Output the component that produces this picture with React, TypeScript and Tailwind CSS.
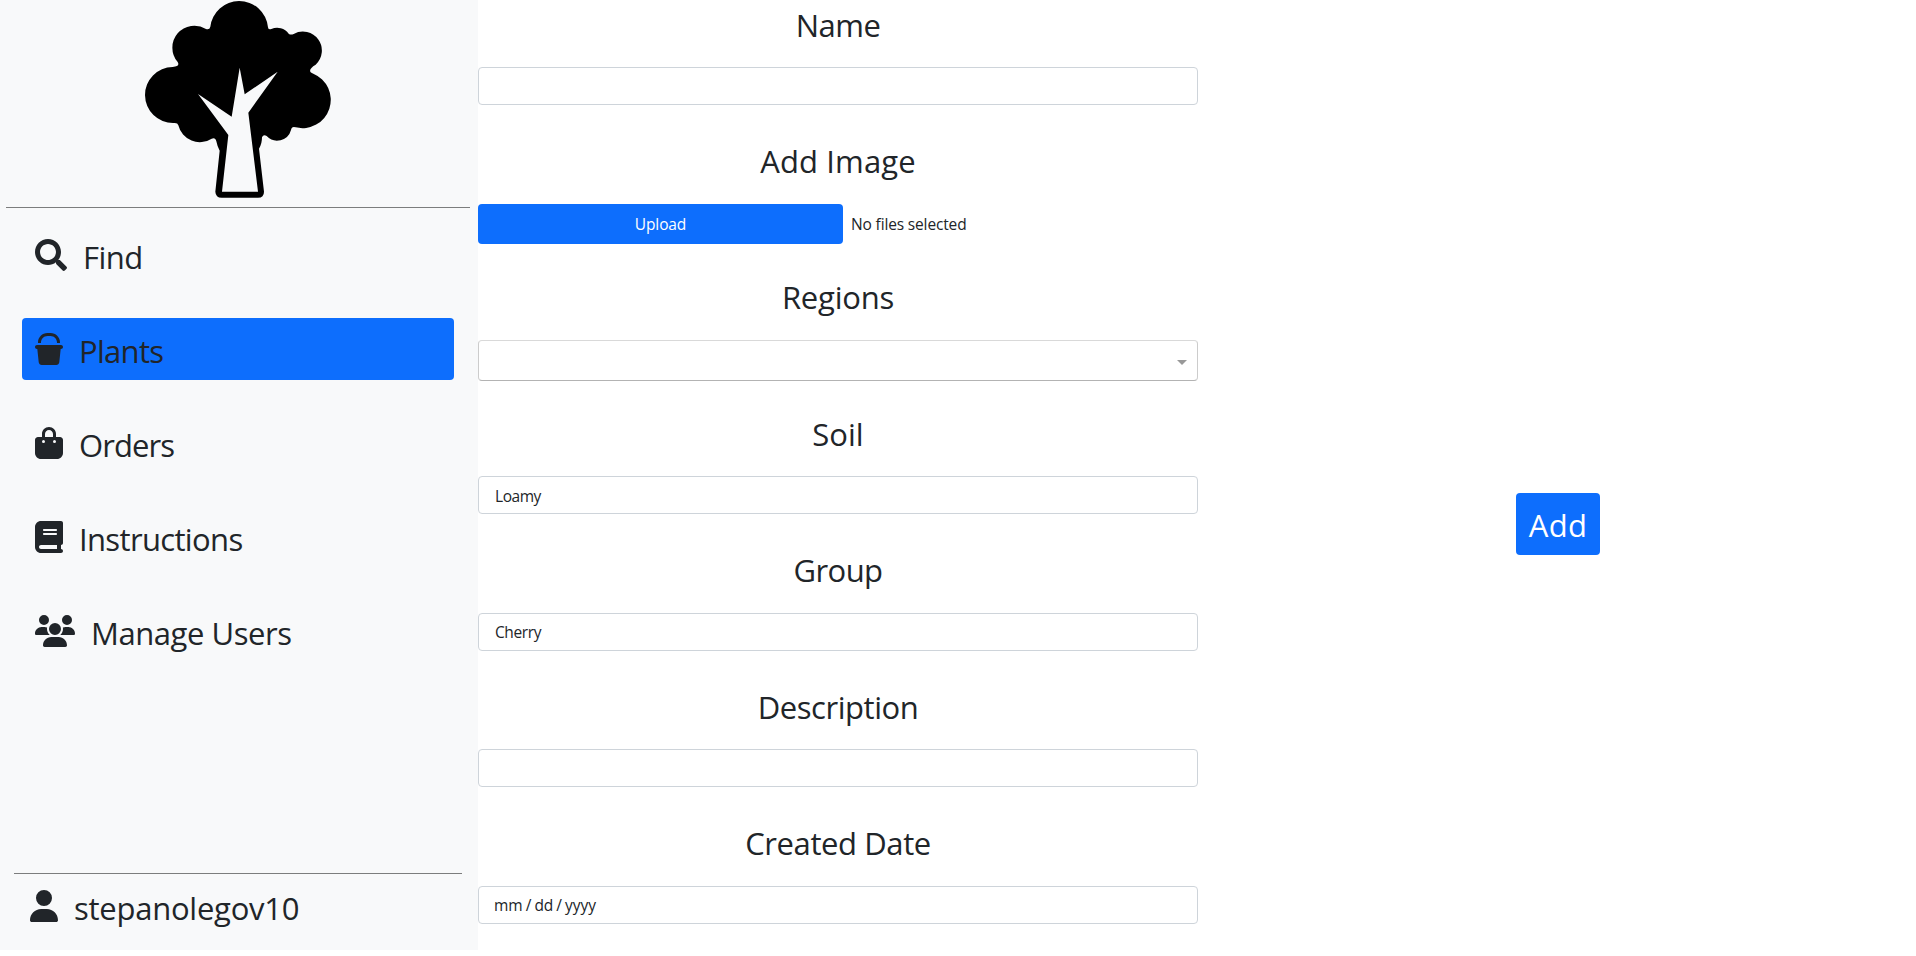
import type { ReactNode } from "react";
import { FaSearch } from "react-icons/fa";
import { FaBucket, FaBagShopping, FaBook, FaUsers, FaUser } from "react-icons/fa6";

function TreeLogo() {
  return (
    <svg viewBox="0 0 660 645" className="block h-[215px] w-[220px] shrink-0" aria-hidden="true">
      <path
        fillRule="evenodd"
        d="M241 80A87 87 0 0 1 327 3A87 87 0 0 1 414 82Q414 90 424 87A42 42 0 0 1 476 101Q482 106 491 102A57 57 0 0 1 557 194Q535 207 542 217Q545 219 550 221A85 85 0 0 1 497 382Q485 378 483 390A43 43 0 0 1 410 408Q400 402 396 412Q396 432 387 446L402 575Q402 593 384 593H275Q257 593 256 575L269 452Q262 440 259 424Q256 411 245 416A66 66 0 0 1 145 376Q143 367 130 369A84 84 0 0 1 128 201Q151 200 143 186A66 66 0 0 1 228 87Q239 90 241 80ZM329 203L305 350L204 282L295 405L276 575H384L355 338L443 215L344 283Z"
      />
    </svg>
  );
}

type NavItemProps = { icon: ReactNode; label: string; tracking: string; active?: boolean };

function NavItem({ icon, label, tracking, active }: NavItemProps) {
  return (
    <li
      className={`flex h-[62px] items-start rounded px-[13px] ${active ? "bg-[#0d6efd]" : ""}`}
    >
      <span className="mt-[15px] mr-4 block">{icon}</span>
      <span className={`mt-[9px] text-[31px] leading-[48px] whitespace-nowrap ${tracking}`}>{label}</span>
    </li>
  );
}

function Field({ label, tracking, children }: { label: string; tracking: string; children: ReactNode }) {
  return (
    <div className="h-[136.4px] shrink-0">
      <div className={`h-[67.2px] pt-[0.6px] text-center text-[31px] leading-[48px] ${tracking}`}>{label}</div>
      {children}
    </div>
  );
}

function Box({ children }: { children?: ReactNode }) {
  return (
    <div className="flex h-[38px] items-center rounded border border-[#ced4da] px-4 pt-px text-[15.5px] leading-6">
      {children}
    </div>
  );
}

export default function App() {
  return (
    <div className="flex h-[956px] w-[1916px] overflow-hidden bg-white font-['Open_Sans',sans-serif] text-[#212529]">
      <aside className="flex h-[950px] w-[478px] shrink-0 flex-col bg-[#f8f9fa]">
        <div className="flex h-[207px] justify-start overflow-hidden pl-[130px]">
          <TreeLogo />
        </div>
        <div className="mr-2 ml-1.5 h-px shrink-0 bg-[#7c7d7d]" />
        <ul className="mt-4 mr-6 ml-[22px] flex flex-col gap-8">
          <NavItem icon={<FaSearch size={32} className="block" />} label="Find" tracking="tracking-[-0.5px]" />
          <NavItem icon={<FaBucket className="block h-8 w-7" />} label="Plants" tracking="tracking-[-0.7px]" active />
          <NavItem icon={<FaBagShopping className="block h-8 w-7" />} label="Orders" tracking="tracking-[-0.9px]" />
          <NavItem icon={<FaBook className="block h-8 w-7" />} label="Instructions" tracking="tracking-[-0.65px]" />
          <NavItem icon={<FaUsers className="block h-8 w-10" />} label="Manage Users" tracking="tracking-[-0.45px]" />
        </ul>
        <div className="mt-auto h-[77px] px-[14px]">
          <div className="mr-0.5 h-px bg-[#7c7d7d]" />
          <div className="flex pl-4">
            <FaUser className="mt-4 mr-4 block h-8 w-7" />
            <span className="mt-[10px] text-[31px] leading-[48px] tracking-[-0.25px]">stepanolegov10</span>
          </div>
        </div>
      </aside>

      <main className="flex w-[720px] shrink-0 flex-col">
        <Field label="Name" tracking="tracking-[-0.5px]">
          <Box />
        </Field>
        <Field label="Add Image" tracking="tracking-[0.1px]">
          <div className="flex h-10 items-center text-[15.5px] leading-6">
            <div className="flex h-10 w-[365px] items-center justify-center rounded bg-[#0d6efd] text-white">
              <span className="tracking-[-0.1px]">Upload</span>
            </div>
            <span className="ml-2 tracking-[-0.15px]">No files selected</span>
          </div>
        </Field>
        <Field label="Regions" tracking="tracking-[-0.2px]">
          <div className="flex h-[41px] items-center justify-end rounded border border-[#ccc] border-t-[#d9d9d9] border-b-[#b3b3b3] pr-2.5">
            <span className="mt-1 border-x-5 border-t-5 border-x-transparent border-t-[#999]" />
          </div>
        </Field>
        <Field label="Soil" tracking="tracking-[0px]">
          <Box>
            <span className="tracking-[-0.45px]">Loamy</span>
          </Box>
        </Field>
        <Field label="Group" tracking="tracking-[-0.6px]">
          <Box>
            <span className="tracking-[-0.4px]">Cherry</span>
          </Box>
        </Field>
        <Field label="Description" tracking="tracking-[-0.45px]">
          <Box />
        </Field>
        <Field label="Created Date" tracking="tracking-[-0.4px]">
          <Box>
            <div className="-ml-px flex gap-[3px]">
              <span>mm</span>
              <span>/</span>
              <span>dd</span>
              <span>/</span>
              <span>yyyy</span>
            </div>
          </Box>
        </Field>
      </main>

      <section className="flex flex-1 items-start justify-center pt-[493px] pl-0.5">
        <button className="h-[62px] w-[84px] rounded bg-[#0d6efd] pt-0.5 text-[31px] leading-[48px] tracking-[0.4px] text-white">
          Add
        </button>
      </section>
    </div>
  );
}
